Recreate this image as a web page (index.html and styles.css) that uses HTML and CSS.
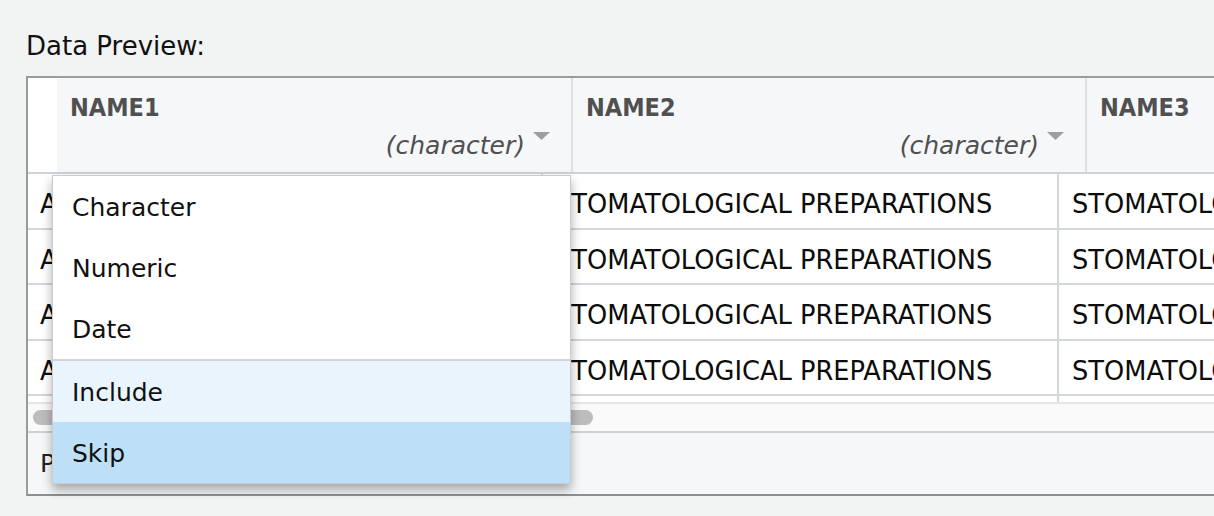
FILE: index.html
```html
<!DOCTYPE html>
<html>
<head>
<meta charset="utf-8">
<link rel="stylesheet" href="styles.css">
</head>
<body>
<div class="page">
  <div class="label">Data Preview:</div>
  <div class="box">
    <div class="head">
      <div class="gutter"></div>
      <div class="hcell hc1">
        <div class="hname">NAME1</div>
        <div class="htype"><span>(character)</span><svg class="caret" width="17" height="8" viewBox="0 0 17 8"><polygon points="0,0 17,0 8.5,8"/></svg></div>
      </div>
      <div class="hcell hc2">
        <div class="hname">NAME2</div>
        <div class="htype"><span>(character)</span><svg class="caret" width="17" height="8" viewBox="0 0 17 8"><polygon points="0,0 17,0 8.5,8"/></svg></div>
      </div>
      <div class="hcell hc3">
        <div class="hname">NAME3</div>
        <div class="htype"><span>(character)</span><svg class="caret" width="17" height="8" viewBox="0 0 17 8"><polygon points="0,0 17,0 8.5,8"/></svg></div>
      </div>
    </div>
    <div class="rows">
      <div class="row"><div class="cell c1">ALIMENTARY TRACT AND METABOLISM</div><div class="cell c2">STOMATOLOGICAL PREPARATIONS</div><div class="cell c3">STOMATOLOGICAL PREPARATIONS</div></div>
      <div class="row"><div class="cell c1">ALIMENTARY TRACT AND METABOLISM</div><div class="cell c2">STOMATOLOGICAL PREPARATIONS</div><div class="cell c3">STOMATOLOGICAL PREPARATIONS</div></div>
      <div class="row"><div class="cell c1">ALIMENTARY TRACT AND METABOLISM</div><div class="cell c2">STOMATOLOGICAL PREPARATIONS</div><div class="cell c3">STOMATOLOGICAL PREPARATIONS</div></div>
      <div class="row"><div class="cell c1">ALIMENTARY TRACT AND METABOLISM</div><div class="cell c2">STOMATOLOGICAL PREPARATIONS</div><div class="cell c3">STOMATOLOGICAL PREPARATIONS</div></div>
      <div class="row"><div class="cell c1">ALIMENTARY TRACT AND METABOLISM</div><div class="cell c2">STOMATOLOGICAL PREPARATIONS</div><div class="cell c3">STOMATOLOGICAL PREPARATIONS</div></div>
    </div>
    <div class="track"><div class="thumb"></div></div>
    <div class="footer">Previewing first 1000 entries.</div>
  </div>
  <div class="menu">
    <div class="item">Character</div>
    <div class="item">Numeric</div>
    <div class="item">Date</div>
    <div class="sep"></div>
    <div class="item include">Include</div>
    <div class="item skip">Skip</div>
  </div>
</div>
</body>
</html>
```
FILE: styles.css
```css
html, body {
  margin: 0;
  padding: 0;
  overflow: hidden;
  background: #f2f3f3;
}
.page {
  position: relative;
  box-sizing: border-box;
  padding: 31px 0 0 26px;
  width: 1214px;
  height: 516px;
  overflow: hidden;
  font-family: "DejaVu Sans", sans-serif;
  font-size: 25px;
  color: #111;
}
.label {
  line-height: 30px;
  height: 30px;
  font-size: 26px;
  color: #111;
}
.box {
  margin-top: 15px;
  width: 1360px;
  border: 2px solid #9b9b9b;
  border-right: none;
  border-bottom-color: #8f8f8f;
  background: #fff;
}
.head {
  display: flex;
  height: 96px;
  box-sizing: border-box;
  border-bottom: 2px solid #cfd3d8;
}
.gutter {
  width: 29px;
  flex: none;
  background: #fff;
}
.hcell {
  flex: none;
  box-sizing: border-box;
  background: #f6f7f9;
  border-right: 2px solid #dcdfe3;
  padding: 16px 21px 0 13px;
  display: flex;
  flex-direction: column;
  gap: 9px;
  color: #505050;
}
.hc1 { width: 516px; }
.hc2 { width: 514px; }
.hc3 { width: 514px; }
.hname {
  font-family: "DejaVu Sans Condensed", "DejaVu Sans", sans-serif;
  font-weight: bold;
  font-size: 25px;
  line-height: 28px;
  height: 28px;
}
.htype {
  display: flex;
  justify-content: flex-end;
  align-items: flex-start;
  gap: 8px;
  line-height: 30px;
  height: 30px;
  font-style: italic;
}
.caret {
  margin-top: 1px;
  fill: #9e9e9e;
}
.rows {
  height: 228px;
  overflow: hidden;
}
.row {
  display: flex;
  height: 55.5px;
  box-sizing: border-box;
  border-bottom: 2px solid #d3d6da;
}
.cell {
  flex: none;
  box-sizing: border-box;
  white-space: nowrap;
  overflow: hidden;
  display: flex;
  align-items: center;
  padding-top: 7px;
  font-size: 25.7px;
  line-height: 30px;
  color: #0c0c0c;
  border-right: 2px solid #d3d6da;
}
.c1 { width: 515px; padding-left: 12px; }
.c2 { width: 516px; padding-left: 12px; }
.c3 { width: 516px; padding-left: 13px; }
.track {
  border-top: 2px solid #e3e5e8;
  border-bottom: 2px solid #cdd1d5;
  background: #fafafa;
  padding-top: 6px;
  height: 21px;
}
.thumb {
  margin-left: 5px;
  width: 560px;
  height: 15px;
  border-radius: 8px;
  background: #bdbdbd;
}
.footer {
  height: 61px;
  line-height: 61px;
  padding-left: 12px;
  background: #f6f7f9;
  color: #222;
}
.menu {
  position: absolute;
  left: 52px;
  top: 175px;
  width: 519px;
  box-sizing: border-box;
  background: #fff;
  border: 1px solid #c8ccd1;
  box-shadow: 0 6px 10px rgba(0, 0, 0, 0.32);
}
.item {
  height: 61px;
  box-sizing: border-box;
  padding: 3px 0 0 19px;
  line-height: 58px;
  color: #111;
}
.sep {
  height: 2px;
  background: #d2d6da;
}
.include { background: #eaf4fd; }
.skip { background: #bde0f8; }
```
